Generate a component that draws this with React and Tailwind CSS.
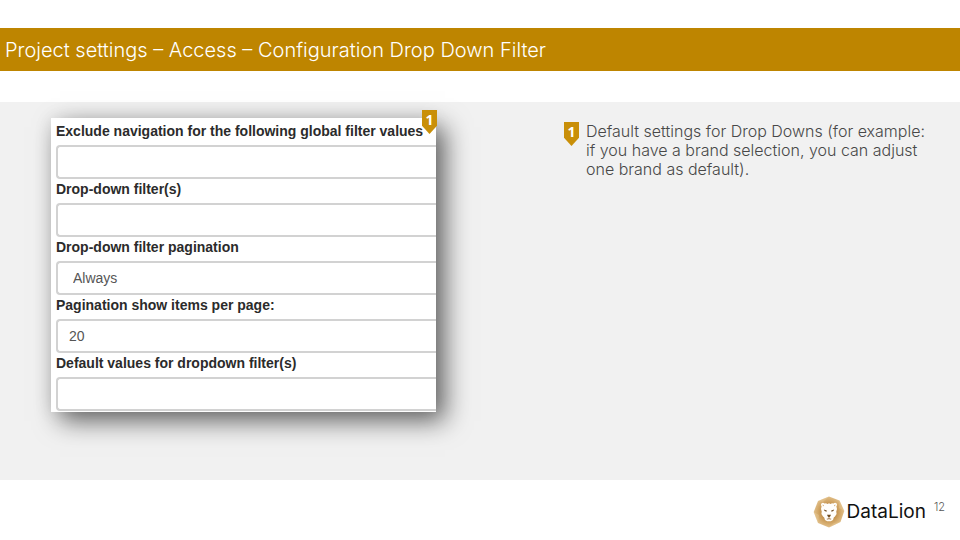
import React from "react";

const fieldClass =
  "block h-[34px] w-full appearance-none rounded-l-[4px] border-2 border-r-0 border-[#d2d2d2] bg-white text-[14px] text-[#555555] outline-none";

const fields = [
  { id: "exclude", label: "Exclude navigation for the following global filter values", value: "" },
  { id: "filters", label: "Drop-down filter(s)", value: "" },
  { id: "pagination", label: "Drop-down filter pagination", options: ["Always"] },
  { id: "per-page", label: "Pagination show items per page:", value: "20" },
  { id: "defaults", label: "Default values for dropdown filter(s)", value: "" },
];

function Marker({ children }) {
  return (
    <span className="flex h-6 w-[15px] shrink-0 justify-center bg-[#c98f08] font-['Noto_Sans',sans-serif] text-[14px] leading-5 font-bold text-white [clip-path:polygon(0_0,100%_0,100%_66%,50%_100%,0_66%)]">
      {children}
    </span>
  );
}

function Field({ id, label, value, options }) {
  return (
    <div>
      <label htmlFor={id} className="block h-6 text-[14px] leading-5 font-bold whitespace-nowrap text-[#2b2b2b]">
        {label}
      </label>
      {options ? (
        <select id={id} className={`${fieldClass} pl-[15px]`}>
          {options.map((option) => (
            <option key={option}>{option}</option>
          ))}
        </select>
      ) : (
        <input id={id} type="text" defaultValue={value} className={`${fieldClass} pl-[11px]`} />
      )}
    </div>
  );
}

function LionMark() {
  return (
    <svg viewBox="0 0 32 32" className="size-8 shrink-0" aria-hidden="true">
      <defs>
        <radialGradient id="mane" cx="50%" cy="50%" r="52%">
          <stop offset="0.4" stopColor="#bd8a45" />
          <stop offset="0.7" stopColor="#d3a868" />
          <stop offset="1" stopColor="#e3c390" />
        </radialGradient>
      </defs>
      <path d="M16 .5 26.5 4.5 31.3 15 27.5 26 16 31.5 5 27 .7 16 5 5Z" fill="url(#mane)" />
      <path d="M16 .5 5 5 10 6ZM31.3 15 26.5 4.5 26 12ZM.7 16 5 27 6 19ZM16 31.5 27.5 26 21 27Z" fill="#edd3a6" opacity=".3" />
      <path
        d="M8.6 7.2Q10.2 6.2 11.5 7.6L13 7.2 14.5 8 16 7.3 17.5 8 19 7.2 20.5 7.6Q21.8 6.2 23.4 7.2 24.6 8.6 23.4 10.2L24 13 23.3 15.5 23.6 18 22 20.5 20.8 21.5 20 24 17.8 25.3H14.2L12 24 11.2 21.5 10 20.5 8.4 18 8.7 15.5 8 13 8.6 10.2Q7.4 8.6 8.6 7.2Z"
        fill="#fffefb"
      />
      <path d="M10.8 13.4 13.8 14.4 13.5 15.8 11.6 15ZM21.2 13.4 18.2 14.4 18.5 15.8 20.4 15ZM14 18.8h4l-.8 1.8-1.2.8-1.2-.8Z" fill="#6f4a1e" />
      <path d="M9.6 8.6 11 9.2 10 10.4ZM22.4 8.6 21 9.2 22 10.4Z" fill="#cfa264" />
      <path d="M16 21.4v1.2M13.8 23q1.2.3 2.2-.4 1 .7 2.2.4" fill="none" stroke="#8f6027" strokeWidth=".8" />
    </svg>
  );
}

export default function App() {
  return (
    <div className="min-h-screen bg-white pt-7 font-['Inter',sans-serif]">
      <header className="flex h-[43px] items-center bg-[#be8500] px-[5px]">
        <h1 className="text-[20px] leading-7 font-light whitespace-nowrap text-white">
          Project settings – Access – Configuration Drop Down Filter
        </h1>
      </header>

      <main className="mt-[31px] grid min-h-[378px] grid-cols-[minmax(0,385px)_minmax(0,1fr)] items-start gap-32 bg-[#f1f1f1] pt-4 pr-6 pl-[51px]">
        <div className="relative font-['Liberation_Sans',Arial,sans-serif]">
          <form className="overflow-hidden bg-white pt-[3px] pb-px pl-[5px] shadow-[9px_9px_24px_rgba(0,0,0,0.58),0_0_18px_rgba(0,0,0,0.08)]">
            {fields.map((field) => (
              <Field key={field.id} {...field} />
            ))}
          </form>
          <div className="absolute -top-2 -right-px">
            <Marker>1</Marker>
          </div>
        </div>

        <div className="flex gap-[7px] pt-1">
          <Marker>1</Marker>
          <p className="text-[16px] leading-[19px] font-light text-[#484848]">
            Default settings for Drop Downs (for example:
            <br />
            if you have a brand selection, you can adjust
            <br />
            one brand as default).
          </p>
        </div>
      </main>

      <footer className="flex items-start justify-end pt-4 pr-[15px]">
        <LionMark />
        <span className="pl-[2px] text-[19px] leading-8 text-[#111111]">DataLion</span>
        <span className="pl-2 text-[11px] leading-[22px] font-light text-[#555555]">12</span>
      </footer>
    </div>
  );
}
